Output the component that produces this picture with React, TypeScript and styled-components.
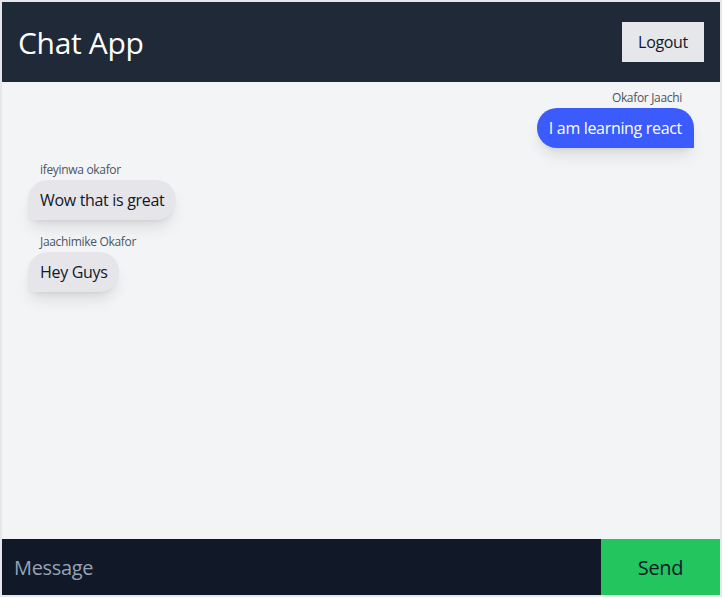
import React from 'react'
import styled, { createGlobalStyle } from 'styled-components'

const GlobalStyle = createGlobalStyle`
  html, body {
    margin: 0;
    padding: 0;
    background: #ffffff;
  }
  body {
    font-family: "Open Sans", "Noto Sans", "Liberation Sans", sans-serif;
    letter-spacing: -0.02em;
  }
  * {
    box-sizing: border-box;
  }
`

const Frame = styled.div`
  width: 722px;
  height: 597px;
  border: 2px solid #e5e7eb;
  display: flex;
  flex-direction: column;
  background: #f3f4f6;
`

const Header = styled.header`
  height: 80px;
  flex-shrink: 0;
  background: #1f2937;
  display: flex;
  align-items: center;
  justify-content: space-between;
  padding: 0 16px;
`

const Title = styled.h1`
  margin: 0;
  color: #ffffff;
  font-size: 30px;
  font-weight: 400;
  line-height: 36px;
  padding-top: 2px;
`

const LogoutButton = styled.button`
  height: 40px;
  padding: 0 16px;
  border: none;
  background: #e5e7eb;
  color: #111827;
  font-family: inherit;
  letter-spacing: inherit;
  font-size: 16px;
  cursor: pointer;
`

const Messages = styled.main`
  flex: 1;
  display: flex;
  flex-direction: column;
  gap: 14px;
  padding: 8px 26px;
  overflow-y: auto;
`

const MessageBlock = styled.div<{ $mine?: boolean }>`
  display: flex;
  flex-direction: column;
  align-items: ${p => (p.$mine ? 'flex-end' : 'flex-start')};
`

const Sender = styled.div`
  font-size: 12px;
  line-height: 16px;
  color: #4b5563;
  padding: 0 12px;
  margin-bottom: 2px;
`

const Bubble = styled.div<{ $mine?: boolean }>`
  height: 40px;
  display: flex;
  align-items: center;
  padding: 0 12px;
  font-size: 16px;
  border-radius: 20px;
  ${p => (p.$mine ? 'border-bottom-right-radius: 0;' : 'border-bottom-left-radius: 0;')}
  background: ${p => (p.$mine ? '#3b5bfd' : '#e6e5ea')};
  color: ${p => (p.$mine ? '#ffffff' : '#111827')};
  box-shadow: 0 10px 15px -3px rgba(0, 0, 0, 0.1), 0 4px 6px -4px rgba(0, 0, 0, 0.1);
`

const Footer = styled.form`
  height: 56px;
  flex-shrink: 0;
  display: flex;
  background: #111827;
`

const MessageInput = styled.input`
  flex: 1;
  border: none;
  outline: none;
  background: transparent;
  padding: 0 12px;
  font-family: inherit;
  letter-spacing: inherit;
  font-size: 20px;
  color: #ffffff;

  &::placeholder {
    color: #94a3b8;
  }
`

const SendButton = styled.button`
  width: 119px;
  border: none;
  background: #22c55e;
  color: #111827;
  font-family: inherit;
  letter-spacing: inherit;
  font-size: 20px;
  cursor: pointer;
`

const messages = [
  { id: 1, user: 'Okafor Jaachi', text: 'I am learning react', mine: true },
  { id: 2, user: 'ifeyinwa okafor', text: 'Wow that is great', mine: false },
  { id: 3, user: 'Jaachimike Okafor', text: 'Hey Guys', mine: false },
]

const App: React.FC = () => {
  return (
    <>
      <GlobalStyle />
      <Frame>
        <Header>
          <Title>Chat App</Title>
          <LogoutButton>Logout</LogoutButton>
        </Header>
        <Messages>
          {messages.map(m => (
            <MessageBlock key={m.id} $mine={m.mine}>
              <Sender>{m.user}</Sender>
              <Bubble $mine={m.mine}>{m.text}</Bubble>
            </MessageBlock>
          ))}
        </Messages>
        <Footer onSubmit={e => e.preventDefault()}>
          <MessageInput placeholder="Message" />
          <SendButton type="submit">Send</SendButton>
        </Footer>
      </Frame>
    </>
  )
}

export default App
